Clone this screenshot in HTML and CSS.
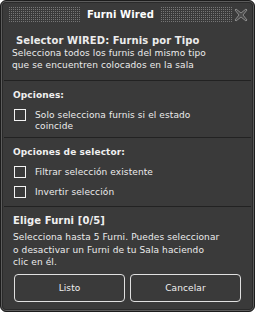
FILE: index.html
```html
<!DOCTYPE html>
<html lang="es">
<head>
    <meta charset="UTF-8">
    <title>Furni Wired</title>
    <link rel="stylesheet" href="styles.css">
</head>
<body>

<div class="window">
    <div class="header">
        <div class="dots"></div>
        <span class="title">Furni Wired</span>
        <div class="dots"></div>
        <svg class="close" width="14" height="14" viewBox="0 0 14 14">
            <path d="M2 1 L7 5 L12 1 L13 2 L9 7 L13 12 L12 13 L7 9 L2 13 L1 12 L5 7 L1 2 Z" fill="#4a4a4a" stroke="#8a8a8a" stroke-width="1"/>
        </svg>
    </div>

    <div class="section intro">
        <h3>Selector WIRED: Furnis por Tipo</h3>
        <p>Selecciona todos los furnis del mismo tipo<br>que se encuentren colocados en la sala</p>
    </div>

    <div class="section options">
        <h4>Opciones:</h4>
        <label class="check first">
            <span class="box"></span>
            <span>Solo selecciona furnis si el estado<br>coincide</span>
        </label>
    </div>

    <div class="section">
        <h4>Opciones de selector:</h4>
        <label class="check first">
            <span class="box"></span>
            <span>Filtrar selección existente</span>
        </label>
        <label class="check">
            <span class="box"></span>
            <span>Invertir selección</span>
        </label>
    </div>

    <div class="section last">
        <h4 class="pick">Elige Furni [0/5]</h4>
        <p>Selecciona hasta 5 Furni. Puedes seleccionar<br>o desactivar un Furni de tu Sala haciendo<br>clic en él.</p>
        <div class="buttons">
            <span class="btn">Listo</span>
            <span class="btn">Cancelar</span>
        </div>
    </div>
</div>

</body>
</html>
```

FILE: styles.css
```css
* {
    padding: 0;
    margin: 0;
    box-sizing: border-box;
}
body {
    background: #ffffff;
    font-family: "DejaVu Sans", Verdana, sans-serif;
    font-size: 9px;
    letter-spacing: 0.1px;
    color: #ececec;
}
.window {
    width: 255px;
    height: 312px;
    background: #3a3a3a;
    border: 1px solid #1c1c1c;
    border-radius: 6px;
    box-shadow: inset 0 0 0 1px #5c5c5c, inset 0 0 0 2px #2a2a2a;
    overflow: hidden;
}
.header {
    height: 27px;
    display: flex;
    align-items: center;
    padding: 0 6px 0 7px;
}
.header .dots {
    flex: 1;
    height: 15px;
    background-image: conic-gradient(#767676 25%, transparent 0);
    background-size: 2px 2px;
}
.header .title {
    padding: 0 6px;
    font-weight: bold;
    font-size: 10px;
    color: #ffffff;
}
.header .close {
    margin-left: 1px;
}
.section {
    margin: 0 3px;
    padding: 8px 9px 8px 9px;
    border-bottom: 1px solid #222222;
}
.section.intro {
    padding: 6px 8px 9px 8px;
}
.section.options {
    padding-bottom: 5px;
}
.section.intro h3 {
    font-size: 10px;
    line-height: 13px;
    padding-left: 4px;
}
.section p {
    line-height: 12px;
    white-space: nowrap;
}
.section h4 {
    font-size: 9px;
    line-height: 12px;
    font-weight: bold;
    color: #f0f0f0;
}
.section h4.pick {
    font-size: 10px;
}
.check {
    display: flex;
    align-items: flex-start;
    margin-top: 8px;
    line-height: 11px;
    white-space: nowrap;
}
.check.first {
    margin-top: 8px;
}
.check .box {
    flex: none;
    width: 12px;
    height: 12px;
    border: 1.5px solid #f4f4f4;
    margin-right: 9px;
    margin-left: 1px;
}
.check span + span {
    padding-top: 1px;
}
.section.last {
    border-bottom: none;
    padding-top: 8px;
    padding-left: 9px;
}
.section.last p {
    line-height: 12.5px;
    margin-top: 4px;
}
.buttons {
    display: flex;
    gap: 5px;
    margin-top: 5px;
    padding-left: 1px;
}
.btn {
    width: 111px;
    height: 28px;
    line-height: 26px;
    text-align: center;
    border: 1px solid #e0e0e0;
    border-radius: 4px;
    color: #f0f0f0;
}
```
